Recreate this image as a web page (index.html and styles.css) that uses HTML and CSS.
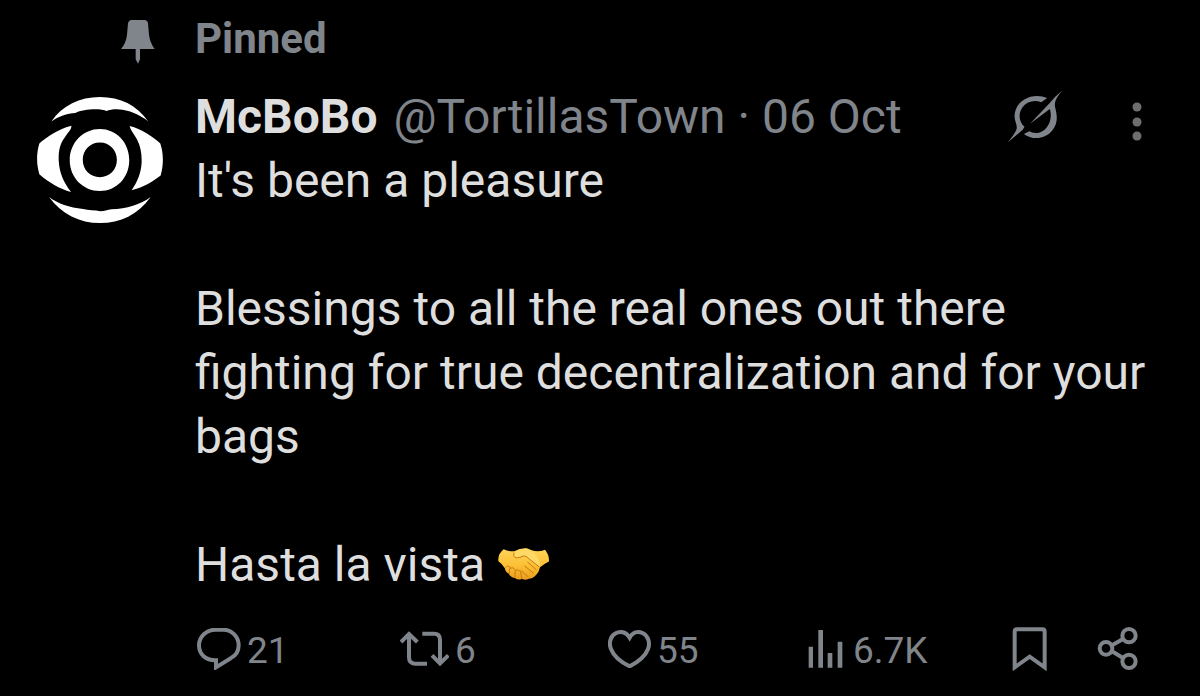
FILE: index.html
```html
<!DOCTYPE html>
<html lang="en">
<head>
<meta charset="utf-8">
<meta name="viewport" content="width=device-width, initial-scale=1">
<title>McBoBo: pinned post</title>
<link rel="stylesheet" href="styles.css">
</head>
<body>
<article class="post">
  <svg class="pin" viewBox="0 0 102 132" aria-hidden="true"><path d="M32 0H70Q80 1 81 10L84 44Q87 68 101 87H57V118L51 131L44 118V87H0Q15 69 18 44L21 10Q23 1 32 0Z"/></svg>
  <div class="pinned">Pinned</div>
  <a class="avatar" href="#" aria-label="McBoBo profile">
    <svg viewBox="52 291 377 377" aria-hidden="true">
      <path d="M95 364C128 316 180 291 240 291C302 291 350 315 385 364C360 345 338 335 312 330C292 326 272 328 260 333C245 325 190 326 167 339C142 340 116 350 95 364Z"/>
      <path d="M88 590C125 641 180 668 240 668C302 668 354 643 392 590C362 613 320 625 275 627C262 628 254 633 241 633C226 629 205 630 190 626C148 621 116 611 88 590Z"/>
      <path d="M59 430C80 412 112 388 155 377C155 390 144 397 136 411C121 430 116 452 117 482C119 518 132 548 154 575C120 566 86 546 59 522C50 492 50 460 59 430Z"/>
      <path d="M421 430C398 410 365 387 329 378C333 393 344 403 352 420C362 440 366 462 365 488C363 520 352 546 335 570C369 562 398 545 422 526C431 492 431 460 421 430Z"/>
      <path fill-rule="evenodd" d="M240 387C290 387 328 428 328 480C328 532 290 572 240 572C190 572 150 532 150 480C150 428 190 387 240 387ZM240 427C211 427 189 450 189 479C189 509 211 531 240 531C269 531 291 509 291 479C291 450 269 427 240 427Z"/>
    </svg>
  </a>
  <div class="content">
    <header class="head">
      <a class="name" href="#">McBoBo</a>
      <span class="meta"><a href="#">@TortillasTown</a> · <time>06 Oct</time></span>
      <button class="tool grok" aria-label="Explain this post"><svg viewBox="78 28 170 160" aria-hidden="true"><path d="M200 52C158 33 101 57 101 108C101 126 113 136 105 151Q98 165 80 187L126 148L131 139C113 123 112 99 125 80C139 62 162 56 182 65Z"/><path d="M246 29Q222 48 207 68L148 130L208 85C219 118 199 158 165 158Q153 158 146 153L129 161C155 181 195 177 216 150C235 127 229 101 225 84C220 65 226 53 246 29Z"/></svg></button>
      <button class="tool more" aria-label="More options"><svg viewBox="0 0 10 40" aria-hidden="true"><circle cx="5" cy="5" r="4.5"/><circle cx="5" cy="20" r="4.5"/><circle cx="5" cy="34" r="4.5"/></svg></button>
    </header>
    <div class="text">
      <p>It's been a pleasure</p>
      <p>Blessings to all the real ones out there fighting for true decentralization and for your bags</p>
      <p>Hasta la vista <svg class="shake" viewBox="40 48 160 106" role="img" aria-label="handshake">
        <defs>
          <linearGradient id="skin" x1="0" y1="0" x2="0" y2="1"><stop offset="0" stop-color="#ffd45a"/><stop offset=".55" stop-color="#fcc034"/><stop offset="1" stop-color="#e99a1c"/></linearGradient>
        </defs>
        <path fill="url(#skin)" d="M60 55Q76 62 92 61Q110 51 130 52L145 58Q166 64 185 56Q199 73 197 92Q183 99 170 109Q167 124 158 133Q149 144 136 144Q125 151 115 144Q104 150 94 142Q80 139 75 128Q65 124 64 113Q56 99 44 91Q41 70 60 55Z"/>
        <path fill="#ffd965" d="M92 63Q110 52 130 53Q151 61 166 84L171 106Q150 98 131 78Q117 74 106 80Q91 82 92 70Z"/>
        <g fill="none" stroke="#c77712" stroke-width="3" stroke-linecap="round"><path d="M91 66Q87 79 99 81Q109 81 119 75Q129 74 137 84L166 107M133 94L158 116M124 106L150 127M112 119L134 138"/><path d="M66 110Q72 101 80 110Q76 117 77 127M80 112Q89 107 95 117L94 139M96 119Q106 114 111 124L115 142"/></g>
      </svg></p>
    </div>
    <footer class="actions">
      <button aria-label="21 replies"><svg width="44" height="42" viewBox="22 46 132 126" aria-hidden="true"><path class="line" d="M78 51H101C127 51 147 73 147 98C147 117 137 130 123 137L79 164V143C48 144 28 125 28 98C28 72 50 51 78 51Z"/></svg><span>21</span></button>
      <button aria-label="6 reposts"><svg width="49" height="36" viewBox="629 58 147 108" aria-hidden="true"><path class="line" d="M632 91L656 67L681 91M656 69V137Q656 156 674 156H710M696 66H731Q749 66 749 84V153M725 131L749 155L774 131"/></svg><span>6</span></button>
      <button aria-label="55 likes"><svg width="43" height="38" viewBox="53 54 129 114" aria-hidden="true"><path class="line" d="M118 77C107 58 89 57 76 64C59 73 55 94 62 111C70 132 91 150 118 163C145 149 165 132 173 111C180 93 174 72 158 64C142 56 127 61 118 77Z"/></svg><span>55</span></button>
      <button class="views" aria-label="6.7K views"><svg width="35" height="38" viewBox="653 54 105 114" aria-hidden="true"><path d="M655 104H668V167H655ZM684 54H698V167H684ZM712 123H726V167H712ZM742 89H756V167H742Z"/></svg><span>6.7K</span></button>
      <button aria-label="Bookmark"><svg width="36" height="44" viewBox="67 46 108 132" aria-hidden="true"><path class="line" d="M82 53H158Q165 53 165 60V167L120 135L75 167V60Q75 53 82 53Z"/></svg></button>
      <button aria-label="Share"><svg width="42" height="44" viewBox="320 46 126 132" aria-hidden="true"><g class="line"><circle cx="347" cy="110" r="19"/><circle cx="416" cy="72" r="20"/><circle cx="416" cy="149" r="20"/><path d="M365 101L398 82M365 119L398 139"/></g></svg></button>
    </footer>
  </div>
</article>
</body>
</html>
```
FILE: styles.css
```css
* { box-sizing: border-box; }
body { margin: 0; background: #000; color: #dedede; font-family: Roboto, "Liberation Sans", sans-serif; font-size: 48px; }
a { color: inherit; text-decoration: none; }
button { border: 0; padding: 0; background: none; color: inherit; font: inherit; cursor: pointer; }
svg { display: block; fill: currentColor; flex: none; }

.post { display: grid; grid-template-columns: 126px 1fr; column-gap: 32px; padding: 16px 36px 20px 37px; }
.pin { width: 34px; height: 44px; margin-top: 4px; margin-right: 8px; justify-self: end; color: #80848b; }
.pinned { color: #80848b; font-size: 42px; font-weight: 700; line-height: 46px; }
.avatar { color: #fff; margin-top: 33px; }
.content { min-width: 0; margin-top: 19px; }

.head { display: flex; align-items: center; height: 66px; white-space: nowrap; }
.name { font-weight: 700; margin-right: 16px; }
.meta { color: #80848b; margin-right: auto; }
.tool { color: #80848b; }
.grok svg { width: 56px; height: 53px; }
.more { margin: 12px 22px 0 69px; color: #6e6e70; }
.more svg { width: 10px; height: 40px; }

.text { line-height: 64px; }
.text p { margin: 0 0 64px; }
.text p:last-child { margin: 0; }
.shake { display: inline-block; width: 53px; height: 35px; vertical-align: -1px; }

.actions { display: grid; grid-template-columns: 203fr 208fr 200fr 204fr 85fr 43fr; align-items: center; margin-top: 26px; padding: 0 24px 0 2px; color: #80848b; font-size: 37px; line-height: 48px; }
.actions button { display: flex; align-items: center; gap: 6px; }
.actions .views { gap: 10px; }
.actions span { margin-top: 4px; }
.line { fill: none; stroke: currentColor; stroke-width: 12; }
```
